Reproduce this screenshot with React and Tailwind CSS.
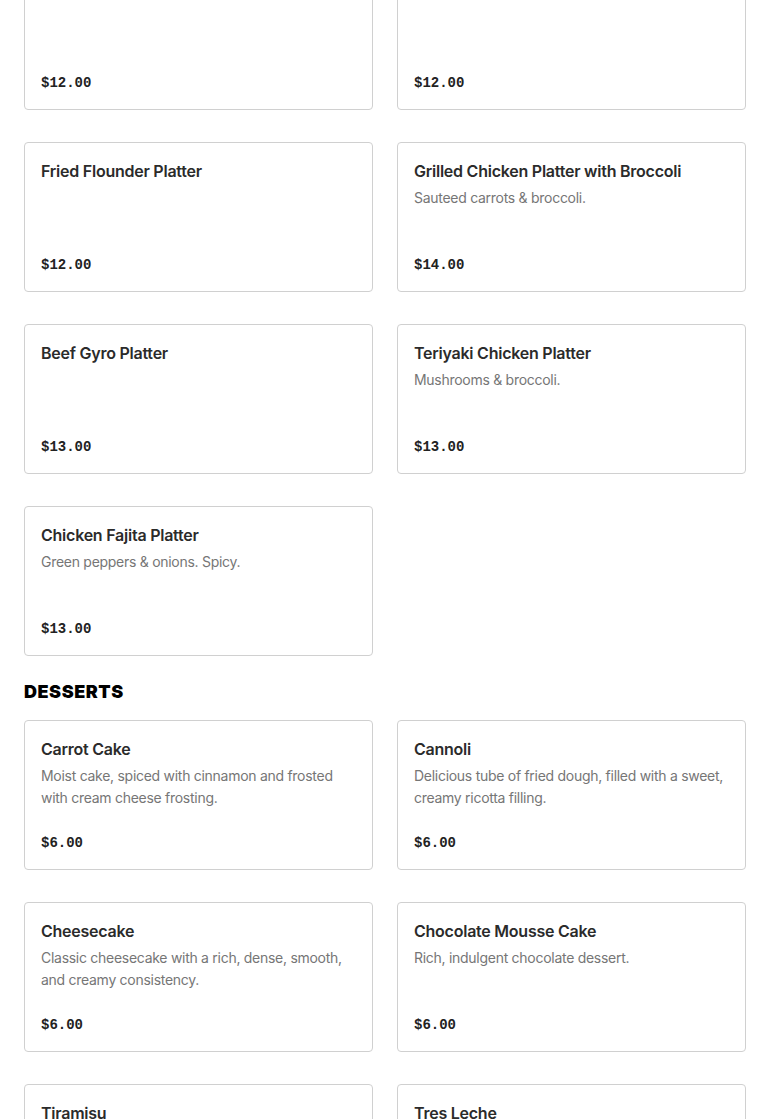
import React from "react";

const sections = [
  {
    title: null,
    items: [
      { name: "Lamb Gyro Platter", desc: "", price: "$12.00" },
      { name: "Chicken Gyro Platter", desc: "", price: "$12.00" },
      { name: "Fried Flounder Platter", desc: "", price: "$12.00" },
      { name: "Grilled Chicken Platter with Broccoli", desc: "Sauteed carrots & broccoli.", price: "$14.00" },
      { name: "Beef Gyro Platter", desc: "", price: "$13.00" },
      { name: "Teriyaki Chicken Platter", desc: "Mushrooms & broccoli.", price: "$13.00" },
      { name: "Chicken Fajita Platter", desc: "Green peppers & onions. Spicy.", price: "$13.00" },
    ],
  },
  {
    title: "DESSERTS",
    items: [
      { name: "Carrot Cake", desc: "Moist cake, spiced with cinnamon and frosted with cream cheese frosting.", price: "$6.00" },
      { name: "Cannoli", desc: "Delicious tube of fried dough, filled with a sweet, creamy ricotta filling.", price: "$6.00" },
      { name: "Cheesecake", desc: "Classic cheesecake with a rich, dense, smooth, and creamy consistency.", price: "$6.00" },
      { name: "Chocolate Mousse Cake", desc: "Rich, indulgent chocolate dessert.", price: "$6.00" },
      { name: "Tiramisu", desc: "Coffee-flavored Italian dessert.", price: "$6.00" },
      { name: "Tres Leche", desc: "Sponge cake soaked in three kinds of milk.", price: "$6.00" },
    ],
  },
];

function Card({ item }) {
  return (
    <div className="flex h-[150px] flex-col rounded-[4px] border border-[#d0d0d0] bg-white px-4 pt-4 pb-4">
      <div className="text-[16px] leading-6 font-semibold tracking-[-0.015em] text-[#2b2b2b]">{item.name}</div>
      {item.desc ? (
        <div className="mt-1 text-[14px] leading-[22px] tracking-[-0.02em] text-[#767676]">{item.desc}</div>
      ) : null}
      <div
        className="mt-auto text-[14px] leading-5 font-bold text-[#222]"
        style={{ fontFamily: '"Liberation Mono", "DejaVu Sans Mono", monospace' }}
      >
        {item.price}
      </div>
    </div>
  );
}

export default function App() {
  return (
    <div
      className="min-h-[1119px] overflow-hidden bg-white px-6"
      style={{ fontFamily: 'Inter, "Noto Sans", sans-serif' }}
    >
      <div className="-mt-[40px]">
        {sections.map((s, i) => (
          <div key={i}>
            {s.title ? (
              <h2 className="mt-6 mb-4 text-[18px] leading-6 font-black tracking-[0.03em] text-black">
                {s.title}
              </h2>
            ) : null}
            <div className="grid grid-cols-2 gap-x-6 gap-y-8">
              {s.items.map((it, j) => (
                <Card key={j} item={it} />
              ))}
            </div>
          </div>
        ))}
      </div>
    </div>
  );
}
